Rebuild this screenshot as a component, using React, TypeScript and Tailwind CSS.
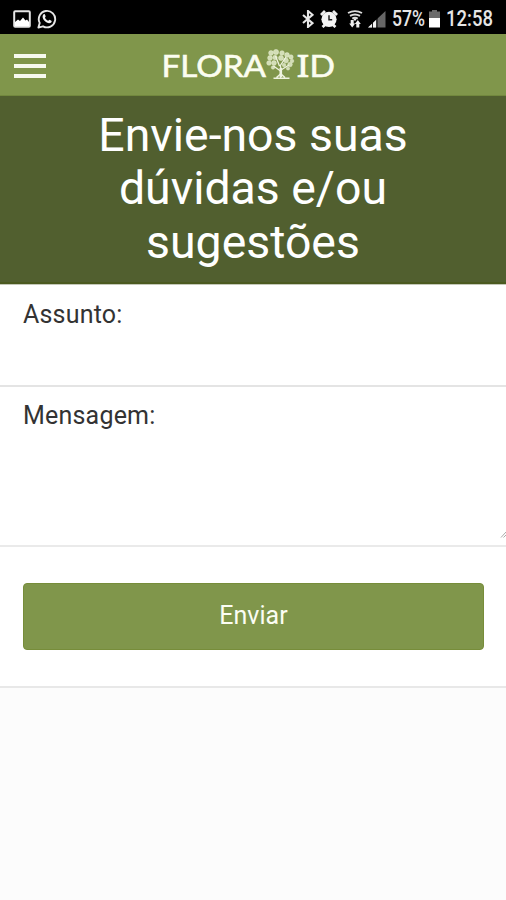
import React from 'react';

const ImageIcon = () => (
  <svg width="18" height="18" viewBox="0 0 18 18">
    <rect x="1.2" y="1.2" width="15.6" height="15.6" rx="1" fill="none" stroke="#e6e6e6" strokeWidth="2" />
    <path d="M2 16V12l3-2.5 2 1.5 3-3.5 2.5 3 1.5-1 2 2.5V16z" fill="#fff" />
  </svg>
);

const WhatsappIcon = () => (
  <svg width="20" height="20" viewBox="0 0 20 20">
    <path
      d="M1.4 18.6l1.3-4.7A8.2 8.2 0 1 1 6 17.3z"
      fill="none"
      stroke="#e6e6e6"
      strokeWidth="1.9"
      strokeLinejoin="round"
    />
    <path
      d="M6.6 5.2c.5-.4 1.1-.3 1.3.2l.8 1.8c.1.4-.8 1.2-.7 1.5.6 1.3 1.7 2.4 3.1 3 .4.1 1.1-1 1.5-.9l1.8.9c.6.3.2 1.6-.5 2.1-1.8 1.2-4.5 0-6.4-2C5.7 9.9 4.8 6.7 6.6 5.2z"
      fill="#f2f2f2"
    />
  </svg>
);

const BluetoothIcon = () => (
  <svg width="12" height="18" viewBox="0 0 12 18">
    <path d="M1 5l9.5 8.2L6 17V1l4.5 3.8L1 13" fill="none" stroke="#e6e6e6" strokeWidth="2.1" />
  </svg>
);

const AlarmIcon = () => (
  <svg width="18" height="18" viewBox="0 0 18 18">
    <path d="M1 5L5 1M17 5L13 1M2.5 17l3.5-3M15.5 17l-3.5-3" stroke="#eee" strokeWidth="2.8" />
    <circle cx="9" cy="9.3" r="7.6" fill="#f4f4f4" />
    <path d="M9 5.3v4.4h3.2" fill="none" stroke="#222" strokeWidth="1.5" />
  </svg>
);

const WifiIcon = () => (
  <svg width="16" height="18" viewBox="0 0 16 18">
    <g fill="none" stroke="#ddd" strokeWidth="1.9">
      <path d="M1 3Q8-.8 15 3" />
      <path d="M3 5.9Q8 3 13 5.9" />
      <path d="M5.3 8.6Q8 7 10.7 8.6" />
    </g>
    <path d="M8 8l1.5 1.5L8 11 6.5 9.5zM3.7 10h3v3.5h1.5L5.2 17.5 2.2 13.5h1.5zM9.3 17.5h3V14h1.5L10.8 10 7.8 14h1.5z" fill="#eee" />
  </svg>
);

const SignalIcon = () => (
  <svg width="18" height="18" viewBox="0 0 18 18">
    <path d="M0 17.5L17.5 1v16.5z" fill="#666" />
    <path d="M0 17.5L8 10v7.5z" fill="#f2f2f2" />
    <path d="M4.5 12v6M9 8v10" stroke="#000" strokeWidth="0.9" />
  </svg>
);

const BatteryIcon = () => (
  <svg width="11" height="18" viewBox="0 0 11 18">
    <path d="M3 0h5v1.5h3V9H0V1.5h3z" fill="#6b6b6b" />
    <path d="M0 8h11v9.5H0z" fill="#fff" />
  </svg>
);

const StatusBar = () => (
  <div className="flex h-[34px] items-center bg-black px-[13px] pt-[3px] text-[#e6e6e6]">
    <div className="flex items-center gap-[6px]">
      <ImageIcon />
      <WhatsappIcon />
    </div>
    <div className="ml-auto flex items-center">
      <BluetoothIcon />
      <span className="ml-[6px]"><AlarmIcon /></span>
      <span className="ml-[9px]"><WifiIcon /></span>
      <span className="ml-[5px]"><SignalIcon /></span>
      <span className="ml-[6px] w-[34px] text-[22px] font-medium leading-[26px]">
        <span className="inline-block origin-left scale-x-[0.8]">57%</span>
      </span>
      <span className="ml-[3px]"><BatteryIcon /></span>
      <span className="ml-[6px] w-[47px] text-[22px] font-medium leading-[26px]">
        <span className="inline-block origin-left scale-x-[0.84]">12:58</span>
      </span>
    </div>
  </div>
);

// leaf clusters of the logo's tree: x, y, radius
const leaves = [
  [108, 4, 2.4],
  [113, 3, 2.6],
  [119, 4, 2.3],
  [124, 6, 2.4],
  [107, 9, 2.4],
  [112, 8.5, 2.2],
  [118, 9, 2.5],
  [128, 8, 2.2],
  [106, 14, 2.3],
  [111, 14, 2.4],
  [123, 11.5, 2.4],
  [129, 12, 1.8],
  [127, 15.5, 2.3],
  [121, 16, 1.8],
  [110, 18.5, 1.7],
  [125, 19.5, 1.6],
];

const Logo = () => (
  <svg width="174" height="50" viewBox="0 0 174 50" fill="#fbfdf0">
    <g fontSize="31.5" stroke="#fbfdf0" strokeWidth="0.6">
      <text x="-0.5" y="36.5" textLength="104.5" lengthAdjust="spacingAndGlyphs" className="font-['Lato',sans-serif]">
        FLORA
      </text>
      <text x="134.5" y="36.5" textLength="13" lengthAdjust="spacingAndGlyphs" className="font-['Noto_Sans',sans-serif]">
        I
      </text>
      <text x="147.5" y="36.5" textLength="25.5" lengthAdjust="spacingAndGlyphs" className="font-['Lato',sans-serif]">
        D
      </text>
    </g>
    {/* tree between the two words */}
    <g transform="translate(1 9)">
      {leaves.map(([x, y, r]) => (
        <circle key={`${x}-${y}`} cx={x} cy={y} r={r} fill="#d3deb6" stroke="#e6edd2" strokeWidth="0.5" />
      ))}
      <g fill="none" stroke="#eef3df">
        <path d="M117.5 29c1.5-5 1-9-.5-13M117.5 22l-7-5M118 21l8-5M116.5 17l-4-10M117 17l6-9" strokeWidth="1.3" />
        <path d="M117.8 19v9" strokeWidth="2.6" />
        <path d="M110.5 29.3h16M113.5 28.5l4-3.5M122 28.5l-4-3.5" strokeWidth="1.5" />
      </g>
    </g>
  </svg>
);

const Header = () => (
  <header className="grid h-[62px] grid-cols-[162px_174px_1fr] items-center border-b border-[#72883e] bg-[#80964b]">
    <button aria-label="Menu" className="ml-[14px] mt-[2px] flex w-[32px] flex-col gap-[6px]">
      <span className="h-[4px] bg-[#f7faef]" />
      <span className="h-[4px] bg-[#f7faef]" />
      <span className="h-[4px] bg-[#f7faef]" />
    </button>
    <Logo />
  </header>
);

const App = () => {
  return (
    <div className="flex min-h-[900px] w-full flex-col bg-[#fcfcfc] font-['Roboto',sans-serif]">
      <StatusBar />
      <Header />
      <h1 className="h-[188px] border-b-2 border-[#4b5a20] bg-[#515f2f] px-[80px] pt-[13px] text-center text-[46.4px] leading-[53.4px] text-white">
        Envie-nos suas dúvidas e/ou sugestões
      </h1>
      <form className="border-t border-[#c4c8b8] bg-white">
        <div className="h-[102px] border-b-2 border-[#e4e4e4] px-[23px] pt-[15px]">
          <label className="block text-[25px] leading-[30px] tracking-[0.2px] text-[#333]">Assunto:</label>
        </div>
        <div className="flex h-[160px] border-b-2 border-[#eaeaea] pl-[23px] pt-[14px]">
          <label className="block flex-1 text-[25px] leading-[30px] tracking-[0.2px] text-[#333]">Mensagem:</label>
          <svg className="mb-[7px] self-end" width="6" height="8" viewBox="0 0 6 8">
            <path d="M1 7.5L6 2M3.5 7.5L6 5" stroke="#aaa" strokeWidth="1" />
          </svg>
        </div>
        <div className="h-[141px] border-b-2 border-[#e8e8e8] px-[23px] pt-[36px]">
          <button
            type="button"
            className="h-[67px] w-[461px] rounded-[4px] border border-[#778d3a] bg-[#80964b] pb-[2px] text-[25px] text-[#fbfdf3]"
          >
            Enviar
          </button>
        </div>
      </form>
    </div>
  );
};

export default App;
